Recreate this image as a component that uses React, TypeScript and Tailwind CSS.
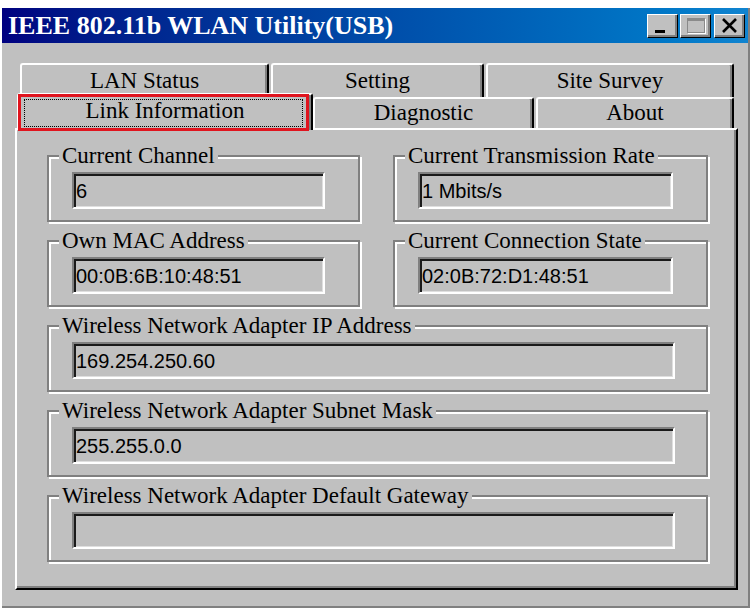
import React from 'react';

const SERIF = "font-['Liberation_Serif','Times_New_Roman',serif]";
const SANS = "font-['Liberation_Sans',Arial,sans-serif]";

const tabBase =
  'flex items-center justify-center border-t-2 border-l-2 border-r-2 border-t-white border-l-white border-r-black rounded-t-[3px] shadow-[inset_-2px_0_0_#808080] bg-[#c0c0c0] text-[23px] text-black';

function Group({
  label,
  value,
  boxClass,
  inputClass,
}: {
  label: string;
  value: string;
  boxClass: string;
  inputClass: string;
}) {
  return (
    <div className={`border-2 border-[#808080] shadow-[inset_2px_2px_0_#fff,2px_2px_0_#fff] pb-[11px] ${boxClass}`}>
      <div className="-mt-[13px] ml-[10px] flex">
        <span className={`${SERIF} bg-[#c0c0c0] px-[3px] text-[23px] leading-[24px] text-black whitespace-nowrap`}>
          {label}
        </span>
      </div>
      <div
        className={`ml-[23px] mt-[4px] h-[37px] border-2 border-t-[#808080] border-l-[#808080] border-b-white border-r-white shadow-[inset_2px_2px_0_#1a1a1a,inset_-1px_-1px_0_#dfdfdf] flex items-center pl-[2px] ${SANS} text-[20px] text-black ${inputClass}`}
      >
        {value}
      </div>
    </div>
  );
}

function TitleButton({ children, className = '' }: { children: React.ReactNode; className?: string }) {
  return (
    <div
      className={`w-[31px] h-[24px] bg-[#c0c0c0] border border-t-white border-l-white border-b-black border-r-black shadow-[inset_-2px_-2px_0_#808080] flex ${className}`}
    >
      {children}
    </div>
  );
}

export default function App() {
  return (
    <div className="w-[753px] h-[612px] bg-white pt-[8px] pl-[2px] overflow-hidden">
      <div className="w-[748px] bg-[#c0c0c0] border-r-2 border-b-2 border-r-[#808080] border-b-[#808080] flex flex-col">
        {/* title bar */}
        <div className="h-[35px] bg-gradient-to-r from-[#000080] to-[#1084d0] flex items-center pl-[6px] pr-[3px]">
          <span className={`${SERIF} text-white font-bold text-[26px] leading-none whitespace-nowrap`}>
            IEEE 802.11b WLAN Utility(USB)
          </span>
          <div className="ml-auto flex items-center">
            <TitleButton className="items-end pl-[7px] pb-[4px]">
              <div className="w-[10px] h-[3px] bg-black" />
            </TitleButton>
            <TitleButton className="ml-[2px] items-center justify-center">
              <div className="w-[18px] h-[15px] border border-t-[3px] border-[#8a8a8a] shadow-[1px_1px_0_#fff]" />
            </TitleButton>
            <TitleButton className="ml-[3px] items-center justify-center">
              <svg width="17" height="15" viewBox="0 0 17 15">
                <path d="M2 1 L15 14 M15 1 L2 14" stroke="#000" strokeWidth="2.6" />
              </svg>
            </TitleButton>
          </div>
        </div>

        {/* body */}
        <div className={`pt-[20px] pl-[13px] pr-[10px] pb-[16px] ${SERIF}`}>
          {/* back tab row */}
          <div className="h-[32px] flex pl-[5px] gap-[2px]">
            <div className={`${tabBase} w-[249px] h-[34px]`}>LAN Status</div>
            <div className={`${tabBase} w-[213px] h-[34px]`}>Setting</div>
            <div className={`${tabBase} w-[248px] h-[34px]`}>Site Survey</div>
          </div>
          {/* front tab row */}
          <div className="h-[33px] flex items-end pl-[2px]">
            <div className={`${tabBase} relative z-10 w-[296px] h-[37px] -mb-[2px] pb-[2px]`}>
              <span>Link Information</span>
              <div className="absolute left-[5px] right-[8px] top-[4px] bottom-[3px] border border-dotted border-black" />
              <div className="absolute -left-[1px] right-[2px] -top-[1px] -bottom-[1px] border-[3px] border-[#e0141e]" />
            </div>
            <div className={`${tabBase} w-[221px] h-[31px]`}>Diagnostic</div>
            <div className={`${tabBase} ml-[2px] w-[198px] h-[31px]`}>About</div>
          </div>

          {/* panel */}
          <div className="h-[462px] w-[723px] border-2 border-t-white border-l-white border-b-black border-r-black shadow-[inset_-2px_-2px_0_#808080] pl-[30px] pt-[25px] flex flex-col gap-[18px]">
            <div className="flex gap-[33px]">
              <Group label="Current Channel" value="6" boxClass="w-[313px]" inputClass="w-[253px]" />
              <Group label="Current Transmission Rate" value="1 Mbits/s" boxClass="w-[315px]" inputClass="w-[255px]" />
            </div>
            <div className="flex gap-[33px]">
              <Group label="Own MAC Address" value="00:0B:6B:10:48:51" boxClass="w-[313px]" inputClass="w-[253px]" />
              <Group
                label="Current Connection State"
                value="02:0B:72:D1:48:51"
                boxClass="w-[315px]"
                inputClass="w-[255px]"
              />
            </div>
            <Group
              label="Wireless Network Adapter IP Address"
              value="169.254.250.60"
              boxClass="w-[661px]"
              inputClass="w-[603px]"
            />
            <Group
              label="Wireless Network Adapter Subnet Mask"
              value="255.255.0.0"
              boxClass="w-[661px]"
              inputClass="w-[603px]"
            />
            <Group
              label="Wireless Network Adapter Default Gateway"
              value=""
              boxClass="w-[661px]"
              inputClass="w-[603px]"
            />
          </div>
        </div>
      </div>
    </div>
  );
}
